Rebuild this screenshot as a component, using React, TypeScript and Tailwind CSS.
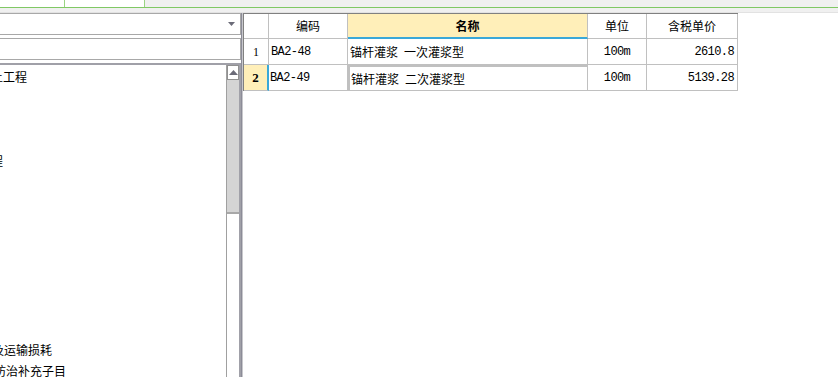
import React from 'react';

const cjk = '"Noto Sans CJK SC", "Liberation Sans", sans-serif';
const mono = '"Liberation Mono", "Noto Sans CJK SC", monospace';

// tree rows on the left, only the tail of a few labels is visible
const treeRows: { text: string; offset: number }[] = [
  { text: '土工程', offset: -9 },
  { text: '', offset: 0 },
  { text: '', offset: 0 },
  { text: '', offset: 0 },
  { text: '程', offset: -9 },
  { text: '', offset: 0 },
  { text: '', offset: 0 },
  { text: '', offset: 0 },
  { text: '', offset: 0 },
  { text: '', offset: 0 },
  { text: '', offset: 0 },
  { text: '', offset: 0 },
  { text: '', offset: 0 },
  { text: '及运输损耗', offset: -8 },
  { text: '防治补充子目', offset: -6 },
];

const rows = [
  { no: '1', code: 'BA2-48', name: ['锚杆灌浆', '一次灌浆型'], unit: '100m', price: '2610.8' },
  { no: '2', code: 'BA2-49', name: ['锚杆灌浆', '二次灌浆型'], unit: '100m', price: '5139.28' },
];

function LeftPanel() {
  return (
    <div className="w-[241px] flex flex-col bg-white">
      {/* combo */}
      <div className="h-[22px] border border-l-0 border-[#a8a8a8] bg-white flex items-center justify-end pr-[5px]">
        <svg width="7" height="4" viewBox="0 0 7 4">
          <path d="M0 0H7L3.5 4Z" fill="#6b6b78" />
        </svg>
      </div>
      <div className="h-[3px]" />
      {/* search */}
      <div className="h-[22px] border border-l-0 border-[#a8a8a8] bg-white" />
      <div className="h-[3px]" />
      {/* tree list */}
      <div className="flex-1 flex border-t-2 border-[#a0a0a8] min-h-0">
        <div className="flex-1 overflow-hidden pt-[1px]" style={{ fontFamily: cjk }}>
          {treeRows.map((r, i) => (
            <div key={i} className="h-[21px] flex items-center whitespace-nowrap text-[12px] text-black leading-none">
              <span style={{ marginLeft: r.offset }}>{r.text}</span>
            </div>
          ))}
        </div>
        {/* scrollbar */}
        <div className="w-[15px] flex flex-col border-l border-[#a0a0a0] border-r-2 border-r-[#a0a0a8]">
          <div className="h-[15px] bg-white border border-[#909090] flex items-center justify-center">
            <svg width="9" height="5" viewBox="0 0 9 5">
              <path d="M0 5H9L4.5 0Z" fill="#6b6b78" />
            </svg>
          </div>
          <div className="h-[134px] bg-[#d4d4d4] border-b-2 border-[#a8a8a8]" />
          <div className="flex-1 bg-white" />
        </div>
      </div>
    </div>
  );
}

function Grid() {
  const cell = 'border-r border-b border-[#c0c0c0] flex items-center text-[12px] leading-none';
  return (
    <div className="w-[495px] self-start border-t border-l border-[#808080] grid grid-cols-[25px_79px_240px_59px_91px]">
      {/* header */}
      <div className={`${cell} h-[25px] bg-white`} />
      <div className={`${cell} h-[25px] justify-center`} style={{ fontFamily: cjk }}>编码</div>
      <div className={`${cell} h-[25px] justify-center bg-[#ffefb9] font-bold border-b-2 border-b-[#3aa8d8]`} style={{ fontFamily: cjk }}>名称</div>
      <div className={`${cell} h-[25px] justify-center`} style={{ fontFamily: cjk }}>单位</div>
      <div className={`${cell} h-[25px] justify-center`} style={{ fontFamily: cjk }}>含税单价</div>
      {rows.map((r, i) => {
        const sel = i === 1;
        return (
          <React.Fragment key={r.no}>
            <div
              className={`${cell} h-[26px] justify-center ${sel ? 'bg-[#ffefb9] font-bold text-[13px] border-r-2 border-r-[#3aa8d8]' : 'bg-white'}`}
              style={{ fontFamily: '"Liberation Serif", serif' }}
            >
              {r.no}
            </div>
            <div
              className={`${cell} h-[26px] text-[11px] tracking-[-0.6px] ${sel ? 'pl-[1px]' : 'pl-[2px]'}`}
              style={{ fontFamily: mono }}
            >
              {r.code}
            </div>
            <div
              className={`${cell} h-[26px] gap-[6px] ${sel ? 'border-2 border-[#7a7a7a] pl-[1px]' : 'pl-[2px]'}`}
              style={{ fontFamily: cjk }}
            >
              <span>{r.name[0]}</span>
              <span>{r.name[1]}</span>
            </div>
            <div className={`${cell} h-[26px] justify-center text-[11px] tracking-[-0.6px]`} style={{ fontFamily: mono }}>
              {r.unit}
            </div>
            <div className={`${cell} h-[26px] justify-end pr-[3px] text-[11px] tracking-[-0.6px]`} style={{ fontFamily: mono }}>
              {r.price}
            </div>
          </React.Fragment>
        );
      })}
    </div>
  );
}

export default function App() {
  return (
    <div className="w-[838px] h-[377px] overflow-hidden bg-white flex flex-col text-black">
      {/* tab strip */}
      <div className="h-[8px] flex border-b border-[#80c864]">
        <div className="w-[65px] bg-white border-r border-[#9ad483]" />
        <div className="w-[80px] bg-white border-r border-[#9ad483]" />
        <div className="flex-1 bg-[#f0f0f0]" />
      </div>
      <div className="h-[5px] bg-[#f0f0f0] border-b border-[#e2e2e2]" />
      <div className="flex-1 flex min-h-0">
        <LeftPanel />
        {/* splitter */}
        <div className="w-[2px] border-l border-[#8c8c98] bg-[#c8c8cc]" />
        <div className="flex-1 bg-white flex">
          <Grid />
        </div>
      </div>
    </div>
  );
}
